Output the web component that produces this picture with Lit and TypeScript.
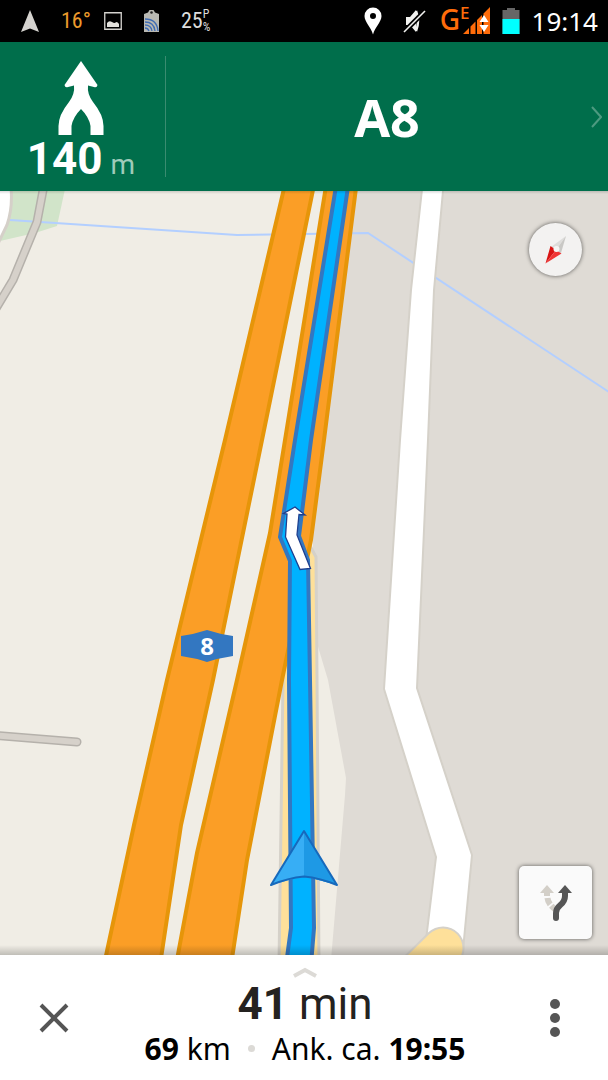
import { LitElement, html, css, svg } from "lit";
import { customElement, property } from "lit/decorators.js";

@customElement("status-bar")
class StatusBar extends LitElement {
  static styles = css`
    :host {
      display: flex;
      justify-content: space-between;
      align-items: center;
      height: 42px;
      padding: 0 10px 0 20px;
      background: #000;
      color: #fff;
    }
    .group { display: flex; align-items: center; }
    .left { gap: 21px; }
    .narrow {
      font: 22px/42px "Roboto Condensed", "Liberation Sans Narrow", Roboto, sans-serif;
      color: #ddd;
    }
    .temp { color: #ec9a2c; margin-right: -8px; }
    .load { display: flex; align-items: center; }
    .marks { display: grid; font-size: 12px; line-height: 13px; }
    .net { display: flex; color: #ff6c0a; font: 500 28px/38px "Noto Sans", sans-serif; height: 42px; }
    .edge { font-size: 17px; line-height: 26px; }
    .clock { font: 26px/42px "Noto Sans", sans-serif; }
    .pin { margin-right: 21px; }
    .mute { margin-right: 13px; }
    .signal { margin-left: -8px; margin-right: 12px; }
    .battery { margin-right: 12px; }
    svg { display: block; flex: none; }
  `;
  render() {
    return html`
      <div class="group left">
        <svg width="20" height="24" viewBox="0 0 20 24"><path d="M10 1 19 23 10 19.500 1 23Z" fill="#d5d3cf"/></svg>
        <span class="narrow temp">16°</span>
        <svg width="18" height="18" viewBox="0 0 18 18"><path d="M.75.75h16.500v16.500H.75Z" fill="none" stroke="#d5d3cf" stroke-width="1.300"/><path d="M3 15v-4q2-3 5-1 3 2 4 0 2 0 3 2v3Z" fill="#e4e2dd"/></svg>
        <svg width="17" height="24" viewBox="0 0 17 24"><path d="M1 5 5 3.500 6.500 1h4L12 3.500 16 5v18H1Z" fill="#b9b9b3"/><circle cx="8.500" cy="3.500" r="1.300" fill="#222"/><g fill="none" stroke="#3f6cb4" stroke-width="1.300"><path d="M2 10q12 0 13 12M2 13q9 0 10 9M2 16q6 0 7 6M2 19q3 0 4 3"/></g></svg>
        <span class="narrow load">25<span class="marks"><span>P</span><span>%</span></span></span>
      </div>
      <div class="group">
        <svg class="pin" width="18" height="28" viewBox="0 0 18 28"><path fill-rule="evenodd" d="M9 .5a8.500 8.500 0 0 1 8.500 8.500C17.500 15 11 20 9 27.500 7 20 .5 15 .5 9A8.500 8.500 0 0 1 9 .5Zm0 5.500a3 3 0 1 0 0 6 3 3 0 0 0 0-6Z" fill="#fff"/></svg>
        <svg class="mute" width="24" height="26" viewBox="0 0 24 26"><path d="M3 9h4l6-7v22l-6-7H3Z" fill="#f2f2f0"/><path d="M13 3q4 10 0 20" fill="none" stroke="#f2f2f0" stroke-width="2.500"/><path d="M1 24 22 3" stroke="#000" stroke-width="5"/><path d="M1 24 22 3" stroke="#f2f2f0" stroke-width="1.600"/></svg>
        <span class="net">G<span class="edge">E</span></span>
        <svg class="signal" width="28" height="28" viewBox="0 0 28 28"><path d="M1 27 7 21v6ZM8.500 19.500l5-5V27h-5ZM15 13l5-5v19h-5ZM21.500 6.500 28 0v27h-6.500Z" fill="#ff6c0a"/><path d="m22 8 4.500 7h-9Zm0 17 4.500-7h-9Z" fill="#fff"/></svg>
        <svg class="battery" width="18" height="28" viewBox="0 0 18 28"><path d="M5 1h8v2h4.500v24H.5V3H5Z" fill="#666"/><path d="M.5 12h17v15H.5Z" fill="#0ff"/></svg>
        <time class="clock">19:14</time>
      </div>`;
  }
}

@customElement("maneuver-header")
class ManeuverHeader extends LitElement {
  @property() road = "";
  @property() distance = "";
  static styles = css`
    :host {
      display: grid;
      grid-template-columns: 166px 1fr;
      padding: 14px 0;
      background: #006e4b;
      color: #fff;
      font-family: Roboto, sans-serif;
    }
    .step {
      display: flex;
      flex-direction: column;
      align-items: center;
      box-sizing: border-box;
      padding: 4px 3px 0 0;
      border-right: 1px solid #3a8c70;
      height: 121px;
    }
    svg { display: block; flex: none; }
    .distance {
      margin: 0;
      font-size: 44px;
      line-height: 48px;
      font-weight: 700;
    }
    .unit { font-size: 28px; font-weight: 400; color: #9fcbb9; margin-left: 8px; }
    .road { display: grid; grid-template-columns: 1fr auto 1fr; align-items: center; }
    h1 { grid-column: 2; margin: 0; font: 700 52px/60px "Noto Sans", sans-serif; }
    button {
      justify-self: end;
      padding: 12px 6px;
      border: 0;
      background: none;
    }
  `;
  render() {
    return html`
      <div class="step">
        <svg width="46" height="75" viewBox="0 0 46 75"><path d="M23 1 39.500 25Q39 28 36 27L30 25.500Q29 34 35 42 45.500 55 45.500 66V75H32.500V66Q31 57 23 49 15 57 13.500 66V75H.5V66Q.5 55 11 42 17 34 16 25.500L10 27Q7 28 6.500 25Z" fill="#fff"/></svg>
        <p class="distance">${this.distance}<span class="unit">m</span></p>
      </div>
      <div class="road">
        <h1>${this.road}</h1>
        <button aria-label="Next step"><svg width="11" height="22" viewBox="0 0 11 22"><path d="m1 1 9 10-9 10" fill="none" stroke="#4d9a80" stroke-width="2"/></svg></button>
      </div>`;
  }
}

const roads = svg`
  <path d="M345 180 313 520V630L328 680 346 778 345 795 331 960H620V180Z" fill="#dfdbd5"/>
  <path d="M8 180H67L57 226 35 233-4 242Z" fill="#d1e4c9"/>
  <path d="M10 220 237 235 368 233 612 394" fill="none" stroke="#b3cfff" stroke-width="2"/>
  <path d="M10 180Q14 205 7 225L-5 250V180Z" fill="#fff" stroke="#d5d0c9" stroke-width="3"/>
  <g fill="none" stroke-linejoin="round" stroke-linecap="round">
    <path d="M45 180 37 222 13 280-8 315M-8 735 77 742" stroke="#b5b1ab" stroke-width="9"/>
    <path d="M45 180 37 222 13 280-8 315M-8 735 77 742" stroke="#d6d1ca" stroke-width="6"/>
  </g>
  <path d="M423 180 411 290 400 440 384 689 436 857 426 940 463 950 472 855 417 688 428 440 434 290 444 180Z" fill="#fff" stroke="#d5d1c9" stroke-width="2"/>
  <g fill="none" stroke-linecap="round">
    <path d="M443 948 400 990" stroke="#d5d1c9" stroke-width="43"/>
    <path d="M443 948 400 990" stroke="#fee09a" stroke-width="39"/>
  </g>
  <path d="M285 560 283 680 279 965H319L317 680 316 557 309 544Z" fill="#fee09a" stroke="#d5d1c9" stroke-width="3"/>
  <g fill="#fb9e26" stroke="#e69509" stroke-width="4">
    <path d="M286 180 225 440 167 680 134 825 104 965H160L181 825 213 680 262 440 315 180Z"/>
    <path d="M327 180 285 440 270 533 237 680 197 853 176 965H231L247 860 282 680 311 540 324 440 357 180Z"/>
  </g>
  <path d="M337 180 295 440 280 537 290 561 289 680 291 928 286 965H311L314 928 310 680 308 560 299 536 311 440 349 180Z" fill="#00b2ff" stroke="#3377c1" stroke-width="4" stroke-linejoin="round"/>
  <path d="M295 507 305 515 299 514.500 297 535 310.500 568.500 300 569.500 285.500 537 287 514 283.500 513.500Z" fill="#fff" stroke="#1f3f8f" stroke-width="1.300"/>
  <path d="M181 636Q195 634 207 630 219 634 233 636V656Q219 658 207 662 195 658 181 656Z" fill="#3377c1"/>
  <text class="shield" x="207" y="655">8</text>`;

@customElement("route-map")
class RouteMap extends LitElement {
  static styles = css`
    :host { display: block; position: relative; overflow: hidden; background: #f0ede5; }
    .map { position: absolute; inset: 0; width: 100%; height: 100%; display: block; }
    .shield { font: 700 24px "Noto Sans", sans-serif; fill: #fff; text-anchor: middle; }
    .shade { position: absolute; left: 0; right: 0; pointer-events: none; }
    .top { top: 0; height: 3px; background: linear-gradient(rgba(0, 0, 0, 0.15), transparent); }
    .bottom { bottom: 0; height: 10px; background: linear-gradient(transparent, rgba(0, 0, 0, 0.2)); }
    button {
      position: absolute;
      display: grid;
      place-items: center;
      padding: 0;
      border: 0;
      box-shadow: 0 0 4px rgba(0, 0, 0, 0.6);
    }
    .compass { top: 32px; right: 26px; width: 53px; height: 53px; border-radius: 50%; background: #f3f2f1; }
    .routes { bottom: 16px; right: 16px; width: 73px; height: 73px; border-radius: 5px; background: #fafafa; }
  `;
  render() {
    return html`
      <svg class="map" viewBox="0 191 608 764" preserveAspectRatio="xMidYMid slice" role="img" aria-label="Route map">
        ${roads}
        <path d="M304 831 337 885 304 876 271 885Z" fill="#37aef5"/>
        <path d="M304 831 337 885 304 876Z" fill="#1e99e5"/>
        <path d="M304 831 337 885Q320 878 304 876.500 288 878 271 885Z" fill="none" stroke="#1669bc" stroke-width="2" stroke-linejoin="round"/>
      </svg>
      <div class="shade top"></div>
      <div class="shade bottom"></div>
      <button class="compass" aria-label="Compass">
        <svg width="24" height="30" viewBox="0 0 24 30"><path d="M22 1 7 12 12 15Z" fill="#dedddb"/><path d="M22 1 17 18 12 15Z" fill="#c9c8c5"/><path d="M1.500 28.500 6.500 11 12 15Z" fill="#d91414"/><path d="M1.500 28.500 12 15 17.500 18.500Z" fill="#f03535"/><circle cx="12.500" cy="14" r="3" fill="#f6f5f4"/></svg>
      </button>
      <button class="routes" aria-label="Alternative routes">
        <svg width="34" height="38" viewBox="0 0 34 38"><path d="M8 1 15 9H11V12H5V9H1Z" fill="#d3cfc8"/><path d="M8.500 14Q9 20 17 26" fill="none" stroke="#d3cfc8" stroke-width="6" stroke-dasharray="7 2"/><path d="M17 34V29C17 20 26 22 26 12V8" fill="none" stroke="#555" stroke-width="6"/><circle cx="17" cy="34" r="3" fill="#555"/><path d="M26 1 33 9H19Z" fill="#555"/></svg>
      </button>`;
  }
}

@customElement("trip-summary")
class TripSummary extends LitElement {
  @property() minutes = "";
  @property() kilometres = "";
  @property() arrival = "";
  static styles = css`
    :host {
      display: grid;
      grid-template-columns: 108px 1fr 106px;
      align-items: center;
      height: 125px;
      background: #fff;
      color: #000;
    }
    svg { display: block; }
    button { justify-self: center; padding: 8px; border: 0; background: none; }
    .info { display: flex; flex-direction: column; align-items: center; }
    .time, .detail { margin: 0; white-space: nowrap; }
    .time { font: 44px/50px Roboto, sans-serif; color: #242220; }
    .detail { display: flex; align-items: center; font: 30px/40px "Noto Sans", sans-serif; }
    .dot { width: 7px; height: 7px; margin: 0 17px; border-radius: 50%; background: #dcdad6; }
  `;
  render() {
    return html`
      <button aria-label="Close"><svg width="30" height="30" viewBox="0 0 30 30"><path d="m2 2 26 26M28 2 2 28" stroke="#555" stroke-width="4"/></svg></button>
      <div class="info">
        <svg width="26" height="12" viewBox="0 0 26 12"><path d="m2 9 11-6 11 6" fill="none" stroke="#dcdad6" stroke-width="4"/></svg>
        <p class="time"><b>${this.minutes}</b> min</p>
        <p class="detail"><span><b>${this.kilometres}</b> km</span><span class="dot"></span><span>Ank. ca. <b>${this.arrival}</b></span></p>
      </div>
      <button aria-label="More options"><svg width="12" height="40" viewBox="0 0 12 40"><g fill="#555"><circle cx="6" cy="6" r="5"/><circle cx="6" cy="20" r="5"/><circle cx="6" cy="34" r="5"/></g></svg></button>`;
  }
}

@customElement("app-root")
class AppRoot extends LitElement {
  static styles = css`
    :host { display: flex; flex-direction: column; min-height: 100vh; }
    route-map { flex: 1; min-height: 300px; }
  `;
  render() {
    return html`
      <status-bar></status-bar>
      <maneuver-header road="A8" distance="140"></maneuver-header>
      <route-map></route-map>
      <trip-summary minutes="41" kilometres="69" arrival="19:55"></trip-summary>`;
  }
}
